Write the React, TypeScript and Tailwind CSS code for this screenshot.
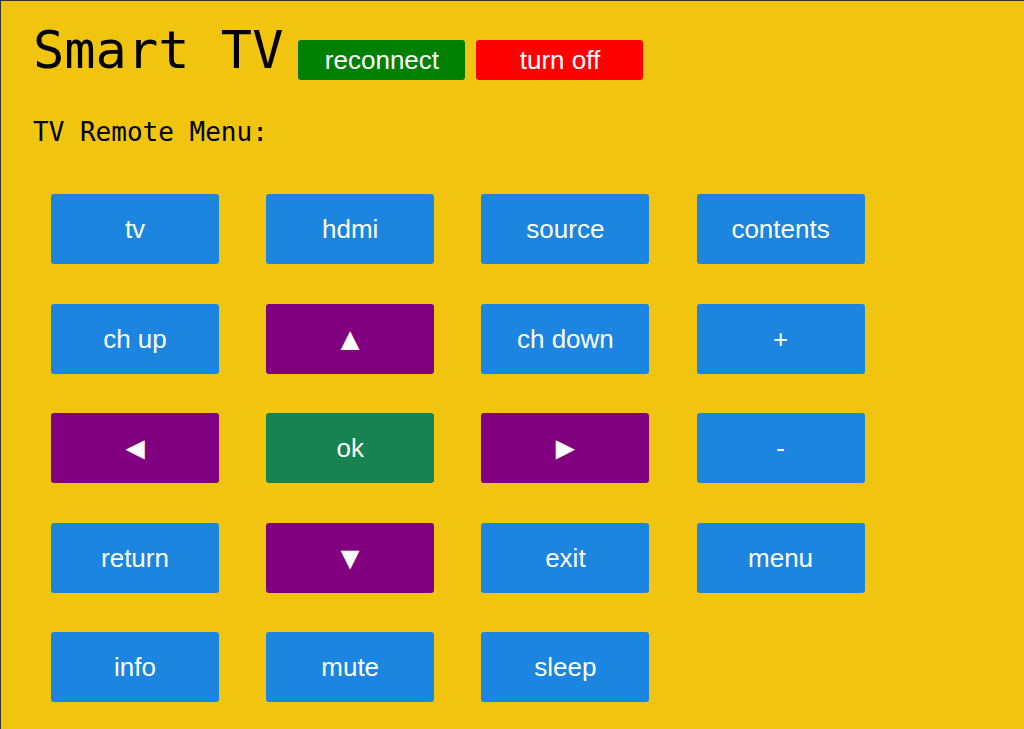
import React from 'react'

type Key = { label: string; tone: 'blue' | 'purple' | 'green'; arrow?: boolean }

const keys: Key[] = [
  { label: 'tv', tone: 'blue' },
  { label: 'hdmi', tone: 'blue' },
  { label: 'source', tone: 'blue' },
  { label: 'contents', tone: 'blue' },
  { label: 'ch up', tone: 'blue' },
  { label: '▲', tone: 'purple', arrow: true },
  { label: 'ch down', tone: 'blue' },
  { label: '+', tone: 'blue' },
  { label: '◄', tone: 'purple', arrow: true },
  { label: 'ok', tone: 'green' },
  { label: '►', tone: 'purple', arrow: true },
  { label: '-', tone: 'blue' },
  { label: 'return', tone: 'blue' },
  { label: '▼', tone: 'purple', arrow: true },
  { label: 'exit', tone: 'blue' },
  { label: 'menu', tone: 'blue' },
  { label: 'info', tone: 'blue' },
  { label: 'mute', tone: 'blue' },
  { label: 'sleep', tone: 'blue' },
]

const toneClass = {
  blue: 'bg-[#1b85e0]',
  purple: 'bg-[#800080]',
  green: 'bg-[#178352]',
}

export default function App() {
  return (
    <div className="min-h-screen bg-[#f1c40f] border-l border-t border-[#333] pl-[32px] pt-[23px] font-['Liberation_Sans',Arial,sans-serif]">
      {/* header */}
      <div className="flex items-start">
        <h1 className="font-['DejaVu_Sans_Mono',monospace] text-[52px] leading-none text-black">Smart TV</h1>
        <div className="flex gap-[11px] ml-[15px] mt-[16px]">
          <button className="w-[167px] h-[40px] rounded-[3px] bg-[#008000] text-white text-[26px] leading-none">
            reconnect
          </button>
          <button className="w-[167px] h-[40px] rounded-[3px] bg-[#ff0000] text-white text-[26px] leading-none">
            turn off
          </button>
        </div>
      </div>

      <p className="mt-[39px] font-['DejaVu_Sans_Mono',monospace] text-[26px] leading-none text-black">TV Remote Menu:</p>

      {/* remote keys */}
      <div className="grid grid-cols-[repeat(4,168px)] gap-x-[47.2px] gap-y-[39.5px] ml-[18px] mt-[49px]">
        {keys.map(k => (
          <button
            key={k.label}
            className={`h-[70px] rounded-[3px] text-white leading-none ${k.arrow ? 'text-[32px]' : 'text-[26px]'} ${toneClass[k.tone]}`}
          >
            {k.label}
          </button>
        ))}
      </div>
    </div>
  )
}
